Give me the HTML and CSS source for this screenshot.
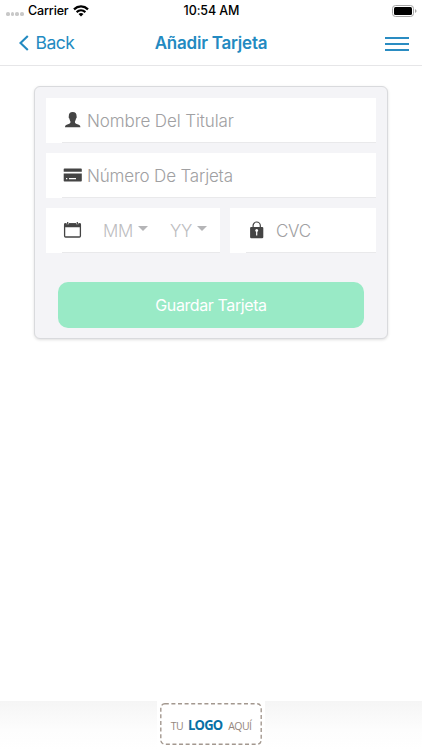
FILE: index.html
```html
<!DOCTYPE html>
<html lang="es">
<head>
  <meta charset="UTF-8">
  <meta name="viewport" content="width=device-width, initial-scale=1">
  <title>Añadir Tarjeta</title>
  <link rel="stylesheet" href="styles.css">
</head>
<body>
<div class="screen">
  <div class="status-bar">
    <div class="status-left">
      <span class="signal"><i></i><i></i><i></i><i></i></span>
      <span class="carrier">Carrier</span>
      <svg class="wifi" width="16" height="12" viewBox="0 0 16 12">
        <path d="M1 4.3C5 .5 11 .5 15 4.3" fill="none" stroke="#000" stroke-width="2.3"/>
        <path d="M3.6 7.1C6.2 4.8 9.8 4.8 12.4 7.1" fill="none" stroke="#000" stroke-width="2.1"/>
        <path d="M8 11.5L5.5 9Q8 7.1 10.5 9Z"/>
      </svg>
    </div>
    <span class="time">10:54 AM</span>
    <svg class="battery" width="25" height="12" viewBox="0 0 25 12">
      <rect x=".5" y=".5" width="21" height="11" rx="3" fill="#fff" stroke="#a5a5a5"/>
      <rect x="2" y="2" width="18" height="8" rx="1.5"/>
      <path d="M23 4Q24.6 5 24.6 6T23 8Z" fill="#a5a5a5"/>
    </svg>
  </div>

  <header class="nav-bar">
    <a class="back" href="#">
      <svg width="10" height="16" viewBox="0 0 10 16"><path d="M8.8 .9L1.5 8l7.3 7.1" fill="none" stroke="#238ac1" stroke-width="2.1"/></svg>
      <span>Back</span>
    </a>
    <h1 class="title">Añadir Tarjeta</h1>
    <div class="menu-btn"><i></i><i></i><i></i></div>
  </header>

  <main class="content">
    <form class="card">
      <div class="field">
        <svg class="icon" width="20" height="18" viewBox="0 0 20 18">
          <path d="M9.7 1C7.1 1 5.7 2.6 5.8 5.2C5.5 6.2 5.8 7.2 6.4 7.6C6.7 9.3 7.3 10.2 7.5 10.8C7.6 12.4 6.4 13 4.3 13.6C2.5 14.1 2.1 14.8 2 16.3H17.4C17.3 14.8 16.9 14.1 15.1 13.6C13 13 11.8 12.4 11.9 10.8C12.1 10.2 12.7 9.3 13 7.6C13.6 7.2 13.9 6.2 13.6 5.2C13.7 2.6 12.3 1 9.7 1Z" fill="#444"/>
        </svg>
        <span class="placeholder holder">Nombre Del Titular</span>
      </div>
      <div class="field">
        <svg class="icon" width="20" height="18" viewBox="0 0 20 18">
          <path d="M1.5 2.4H18Q18.8 2.4 18.8 3.2V5.8H.7V3.2Q.7 2.4 1.5 2.4ZM.7 7.6H18.8V14.7Q18.8 15.5 18 15.5H1.5Q.7 15.5 .7 14.7Z" fill="#444"/>
          <path d="M3 12.6H4.3M6 12.6H13" stroke="#fff" stroke-width="1.2"/>
        </svg>
        <span class="placeholder number">Número De Tarjeta</span>
      </div>
      <div class="row">
        <div class="field expiry">
          <svg class="icon" width="20" height="18" viewBox="0 0 20 18">
            <path d="M2 2.2H17Q18 2.2 18 3.2V6.2H1V3.2Q1 2.2 2 2.2Z" fill="#444"/>
            <rect x="1.6" y="2.8" width="15.8" height="13.2" rx="1" fill="none" stroke="#444" stroke-width="1.3"/>
            <path d="M4.7 .9V3.2M14.3 .9V3.2" stroke="#fff" stroke-width="2.2"/>
            <path d="M4.7 .9V3.2M14.3 .9V3.2" stroke="#444" stroke-width="1.2"/>
          </svg>
          <span class="select month">MM</span>
          <span class="select year">YY</span>
        </div>
        <div class="field cvc">
          <svg class="icon" width="20" height="18" viewBox="0 0 20 18">
            <path d="M6.1 6.6V4.6a3.6 3.6 0 0 1 7.2 0V6.6" fill="none" stroke="#444" stroke-width="1.2"/>
            <rect x="3.1" y="5.9" width="13.2" height="11.3" rx="1.2" fill="#444"/>
            <path d="M8.2 9.5a1.5 1.5 0 0 1 3 0q0 .8-.9 1.2V14.4H9.1V10.7Q8.2 10.3 8.2 9.5Z" fill="#fff"/>
          </svg>
          <span class="placeholder code">CVC</span>
        </div>
      </div>
      <button class="save-btn" type="button"><span>Guardar Tarjeta</span></button>
    </form>
  </main>

  <footer class="footer">
    <div class="logo-wrap">
      <div class="logo">
        <svg class="logo-frame" width="102" height="42" viewBox="0 0 102 42">
          <rect x=".8" y=".8" width="100.4" height="40.4" rx="4" fill="none" stroke="#a3988f" stroke-width="1.4" stroke-dasharray="4 2.6"/>
        </svg>
        <span class="logo-tu">TU</span>
        <strong class="logo-name">LOGO</strong>
        <span class="logo-aqui">AQUÍ</span>
      </div>
    </div>
  </footer>
</div>
</body>
</html>
```

FILE: styles.css
```css
* {
  box-sizing: border-box;
}

body {
  margin: 0;
  background: #fff;
  font-family: Inter, "Liberation Sans", sans-serif;
}

.screen {
  display: flex;
  flex-direction: column;
  width: 422px;
  height: 750px;
  overflow: hidden;
}

/* status bar */
.status-bar {
  display: grid;
  grid-template-columns: 1fr auto 1fr;
  align-items: center;
  height: 21px;
  padding: 0 5px 0 6px;
}

.status-left {
  display: flex;
  align-items: center;
}

.signal {
  display: flex;
  gap: 1px;
  width: 22px;
  padding-top: 7px;
}

.signal i {
  width: 3.7px;
  height: 3.7px;
  border-radius: 50%;
  background: #c8c8c8;
}

.carrier {
  width: 45px;
  font-size: 12.5px;
  font-weight: 500;
  letter-spacing: -.15px;
}

.time {
  font-size: 12.5px;
  font-weight: 500;
  letter-spacing: -.1px;
}

.battery {
  justify-self: end;
}

/* navigation */
.nav-bar {
  display: grid;
  grid-template-columns: 1fr auto 1fr;
  align-items: center;
  height: 45px;
  padding: 0 13.5px;
  border-bottom: 1px solid #e6e6e8;
  color: #238ac1;
}

.back {
  display: flex;
  align-items: center;
  gap: 7px;
  margin-left: 5px;
  padding-bottom: 1px;
  color: #238ac1;
  font-size: 17.5px;
  letter-spacing: -.5px;
  text-decoration: none;
}

.title {
  margin: 0;
  font-size: 17px;
  font-weight: 600;
  letter-spacing: -.22px;
}

.menu-btn {
  display: flex;
  flex-direction: column;
  justify-self: end;
  gap: 4px;
  width: 24px;
  padding-top: 1px;
}

.menu-btn i {
  height: 2px;
  background: #2a8cc2;
}

/* card form */
.content {
  flex: 1;
  padding: 20px 34px;
}

.card {
  height: 253px;
  padding: 11px;
  border: 1px solid #d9dadd;
  border-radius: 6px;
  background: #f4f4f7;
  box-shadow: 0 1px 3px rgba(0, 0, 0, .13);
}

.field {
  display: flex;
  align-items: center;
  height: 45px;
  margin-bottom: 10px;
  padding: 0 0 1px 17px;
  background: linear-gradient(#e9e9eb, #e9e9eb) 16px 100% / 100% 1px no-repeat #fff;
}

.icon {
  flex: none;
}

.placeholder {
  margin-left: 4px;
  padding-top: 1px;
  color: #a0a0a2;
  font-size: 17px;
  font-weight: 300;
  white-space: nowrap;
}

.holder {
  letter-spacing: -.1px;
}

.number {
  letter-spacing: -.17px;
}

.row {
  display: flex;
  gap: 10px;
}

.expiry {
  width: 174px;
}

.cvc {
  flex: 1;
}

.code {
  margin-left: 9px;
  letter-spacing: -.3px;
}

.select {
  display: flex;
  gap: 5px;
  padding-top: 1px;
  color: #bdbdbf;
  font-size: 17px;
  font-weight: 300;
  letter-spacing: -.3px;
}

.select::after {
  content: "";
  align-self: flex-start;
  margin-top: 5px;
  border: 5px solid transparent;
  border-top-color: #b5b5b7;
  border-bottom: 0;
}

.month {
  margin-left: 20px;
}

.year {
  margin-left: 22px;
}

.save-btn {
  display: block;
  width: 306px;
  height: 46px;
  margin: 19px 0 0 12px;
  padding: 0;
  border: 0;
  border-radius: 10px;
  background: #99eac6;
  color: #fff;
  font-family: inherit;
  font-size: 16px;
  letter-spacing: -.4px;
}

/* bottom logo */
.footer {
  display: flex;
  justify-content: center;
  height: 49px;
  background: linear-gradient(#f5f5f5, #fdfdfd 60%, #fff);
}

.logo-wrap {
  width: 108px;
  padding: 2px 3px;
  background: #fff;
}

.logo {
  position: relative;
  display: flex;
  align-items: baseline;
  justify-content: center;
  height: 42px;
  padding-top: 11px;
  color: #96877d;
  font-family: "Open Sans", "Noto Sans", sans-serif;
  font-size: 10.5px;
  line-height: 20px;
}

.logo-frame {
  position: absolute;
  top: 0;
  left: 0;
}

.logo-tu {
  letter-spacing: -.4px;
}

.logo-name {
  width: 36px;
  margin: 0 4px 0 5px;
  color: #0870a5;
  font-size: 15px;
  letter-spacing: -.9px;
  transform: scaleX(.87);
  transform-origin: left;
}

.logo-aqui {
  letter-spacing: -.6px;
}
```
